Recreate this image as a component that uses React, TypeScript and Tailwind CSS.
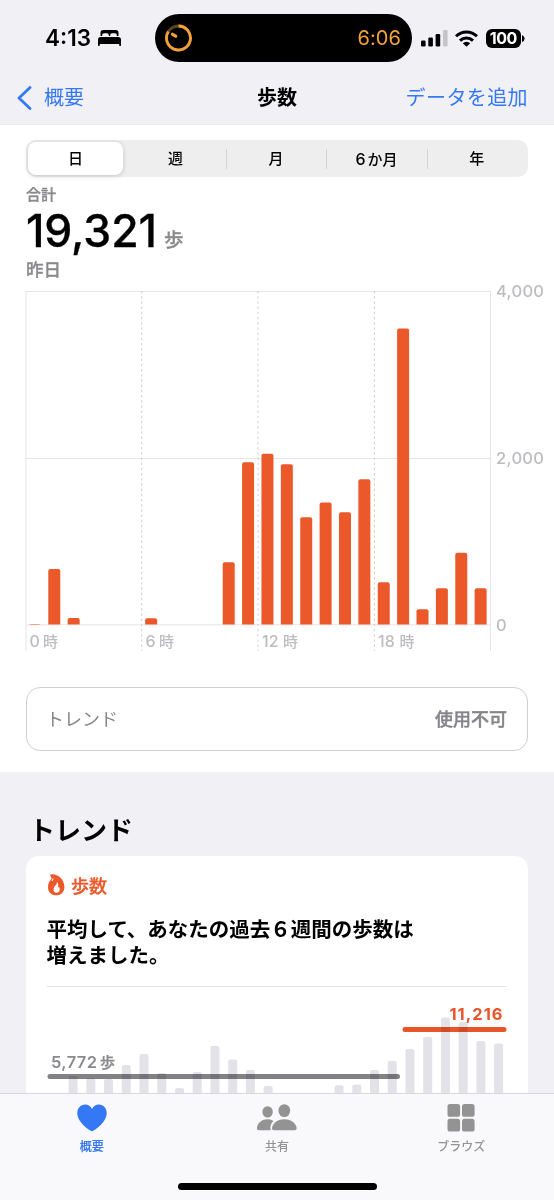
import React from "react";

const FONT = "font-['Inter','Noto_Sans_CJK_JP',sans-serif]";

const SEGMENTS = ["日", "週", "月", "6か月", "年"];

const HOURLY = [
  5, 665, 78, 0, 0, 0, 75, 0, 0, 0, 748, 1948, 2050, 1924, 1288, 1465, 1348, 1744, 508, 3552, 184, 434, 860, 436,
];

const WEEKLY_TOPS = [
  76, 78, 79, 65, 54, 73, 88, 72, 46, 59.5, 70, 86, 0, 0, 0, 85.3, 84.6, 70, 61, 49, 37, 17.5, 22, 41, 43.6,
];

function StatusBar() {
  return (
    <header className="flex h-[76px] items-start">
      <div className="flex h-[76px] w-[155px] items-center pl-[45px]">
        <span className="w-[46px] text-[22.5px] font-semibold leading-none tracking-[0px]">4:13</span>
        <svg className="ml-[7px]" width="23" height="16" viewBox="0 0 23 16">
          <path d="M2.5 6V2.8Q2.5 0 5.3 0H17.7Q20.5 0 20.5 2.8V6H18.8V5Q18.8 3.2 17 3.2H14Q12.2 3.2 12.2 5V6H10.8V5Q10.8 3.2 9 3.2H6Q4.2 3.2 4.2 5V6Z" />
          <path d="M0 9.7Q0 7 2.7 7H20.3Q23 7 23 9.7V15.3Q23 16 22.3 16H21.9Q21.2 16 21.2 15.3V14H1.8V15.3Q1.8 16 1.1 16H.7Q0 16 0 15.3Z" />
        </svg>
      </div>
      <div className="mt-[14px] flex h-[48px] w-[257px] items-center justify-between rounded-full bg-black pl-[10px] pr-[11px]">
        <svg width="27" height="28" viewBox="0 0 27 28" fill="none" strokeWidth="2.8">
          <circle cx="13.5" cy="14" r="12" stroke="#5f4320" />
          <path d="M13.5 2A12 12 0 1 1 3.4 7.5" stroke="#f2a13b" />
          <path d="M7.5 10.3L10.7 12.2" stroke="#f2a13b" strokeWidth="3.2" strokeLinecap="round" />
        </svg>
        <span className="text-[20px] leading-none tracking-[0.1px] text-[#f2a13b]">6:06</span>
      </div>
      <div className="flex h-[76px] items-center pl-[9px]">
        <svg width="27" height="17" viewBox="0 0 27 17">
          <rect x="0" y="10.5" width="4.6" height="6" rx="1.2" />
          <rect x="7.3" y="7.5" width="4.6" height="9" rx="1.2" />
          <rect x="14.6" y="4" width="4.6" height="12.5" rx="1.2" />
          <rect x="22" y="0" width="4.6" height="16.5" rx="1.2" fill="#c5c5c9" />
        </svg>
        <svg className="ml-[7px]" width="23" height="17" viewBox="0 0 23 17" fill="none" stroke="black" strokeWidth="3">
          <path d="M1 6.3A15 15 0 0 1 22 6.3" />
          <path d="M5 10.6A9.3 9.3 0 0 1 18 10.6" />
          <path d="M11.5 16.8L7.8 13.2A5.3 5.3 0 0 1 15.2 13.2Z" fill="black" stroke="none" />
        </svg>
        <div className="ml-2 flex h-[19px] w-[34.5px] items-center justify-center rounded-[6px] bg-black text-[16px] font-bold leading-none tracking-[-0.5px] text-white">
          100
        </div>
        <svg className="ml-px" width="3" height="7" viewBox="0 0 3 7">
          <path d="M0 0Q2.6 1 2.6 3.5T0 7Z" />
        </svg>
      </div>
    </header>
  );
}

function NavBar() {
  return (
    <nav className="grid h-[49px] grid-cols-3 items-center border-b border-[#ececf0] pb-[4px] text-[20px] leading-[30px]">
      <div className="flex items-center pl-[17px] text-[#3478f6]">
        <svg className="mb-px" width="15" height="24" viewBox="0 0 15 24" fill="none" stroke="currentColor" strokeWidth="2.8" strokeLinecap="round" strokeLinejoin="round">
          <path d="M13 1.5L2 12L13 22.5" />
        </svg>
        <span className="ml-3">概要</span>
      </div>
      <h1 className="text-center font-bold">歩数</h1>
      <div className="whitespace-nowrap pr-[26px] text-right tracking-[0.4px] text-[#3478f6]">データを追加</div>
    </nav>
  );
}

function Segmented() {
  return (
    <div className="mx-[26px] flex h-[37px] rounded-[10px] bg-[#eeeeef] text-[15px] font-medium leading-none">
      {SEGMENTS.map((label, i) => (
        <div key={label} className="flex flex-1 items-center">
          {i === 0 ? (
            <div className="ml-[2px] flex h-[33px] w-[95px] items-center justify-center rounded-[8px] bg-white shadow-[0_1px_5px_rgba(0,0,0,0.18)]">
              {label}
            </div>
          ) : (
            <>
              <div className={i === 1 ? "-ml-px h-5 w-px" : "-ml-px h-5 w-px bg-[#d3d3d6]"} />
              <div className="flex-1 pr-[2px] text-center">
                {label.startsWith("6") ? (
                  <>
                    <span className="mr-[2px] text-[16px]">6</span>
                    {label.slice(1)}
                  </>
                ) : (
                  label
                )}
              </div>
            </>
          )}
        </div>
      ))}
    </div>
  );
}

function StepsChart() {
  const base = 333.5;
  return (
    <svg className="block overflow-visible" width="554" height="370" viewBox="0 0 554 370">
      <g stroke="#e5e5e8" strokeWidth="1">
        <path d="M26 .5H490.5M26 167.5H490.5M26 333.8H490.5M26 0V360M490.5 0V360" />
        <path d="M141.7 0V360M258 0V360M374.4 0V360" stroke="#cfcfd2" strokeDasharray="2.4 2.8" />
      </g>
      <g fill="#eb5829">
        {HOURLY.map((v, i) => {
          const h = v / 12;
          const r = Math.min(2, h);
          const x = 28.9 + i * 19.38;
          return v > 0 ? (
            <path key={i} d={`M${x} ${base}v${r - h}q0 ${-r} 2 ${-r}h8q2 0 2 ${r}v${h - r}z`} />
          ) : null;
        })}
      </g>
      <g fill="#bdbdc1" fontSize="16.5" fontWeight="500">
        <text x="496" y="6" textLength="48">4,000</text>
        <text x="496" y="173" textLength="48">2,000</text>
        <text x="496" y="339.5">0</text>
      </g>
      <g fill="#bdbdc1" fontSize="15" fontWeight="500">
        <g fontSize="16">
          <text x="29.5" y="356">0</text>
          <text x="145.5" y="356">6</text>
          <text x="262" y="356">12</text>
          <text x="378" y="356">18</text>
        </g>
        <text x="43" y="356">時</text>
        <text x="159" y="356">時</text>
        <text x="283" y="356">時</text>
        <text x="399.5" y="356">時</text>
      </g>
    </svg>
  );
}

function WeeklyChart() {
  return (
    <svg className="block" width="502" height="106" viewBox="26 -13 502 106">
      <g fill="none" strokeWidth="5" strokeLinecap="round">
        <path d="M50 76.6H397.5" stroke="#828286" />
        <path d="M405 29.4H504" stroke="#e9552b" />
      </g>
      <g fill="#e3e2e8" className="mix-blend-multiply">
        {WEEKLY_TOPS.map((top, i) =>
          top ? <rect key={i} x={68.6 + i * 17.73} y={top} width="9" height={110 - top} rx="2" /> : null,
        )}
      </g>
      <text x="51" y="67.5" fontSize="16.5" fontWeight="600" fill="#8a8a8e" textLength="46">5,772</text>
      <text x="100" y="67.5" fontSize="15" fontWeight="500" fill="#8a8a8e" stroke="#8a8a8e" strokeWidth=".3">歩</text>
      <text x="449.5" y="20.3" fontSize="16.5" fontWeight="700" fill="#e9552b" textLength="53">11,216</text>
    </svg>
  );
}

function TrendCard() {
  return (
    <section className="flex h-[321px] flex-col overflow-hidden px-[26px]">
      <h2 className="mt-[40px] h-[44px] pl-[3px] text-[26px] font-bold leading-[37px]">トレンド</h2>
      <div className="flex h-[237px] flex-col rounded-t-[13px] bg-white">
        <div className="flex h-[61px] items-center pl-[22px] text-[#eb5829]">
          <svg className="mb-[3px]" width="17" height="22" viewBox="0 0 17 22">
            <path
              fillRule="evenodd"
              d="M3 .4C9-.5 16.4 4.6 16.4 13C16.4 18 13 21.3 8.3 21.3C3.4 21.3 0 18 0 13.2C0 9.6 1.4 6.8 3.1 5.2C3.7 4.6 3.6 3.4 2.4 1.9C1.8 1.1 2.1.5 3 .4ZM3.6 6.2C3.7 7.2 4.2 7.6 4.8 6.8C5.6 5.6 5.4 4.6 4.8 3.6C4.9 4.7 4.4 5.5 3.6 6.2ZM8.8 8C9.2 10.2 7.8 11 6.7 12.3C5.1 14.1 4.9 18.7 8.4 18.7C12.4 18.7 12.2 14.7 10.9 12.6C10.5 13.8 10 14 9.7 13.4C10.7 11.4 10.4 9.2 8.8 8Z"
              fill="currentColor"
            />
          </svg>
          <span className="ml-[6px] text-[18px] font-medium leading-none [-webkit-text-stroke:0.3px]">歩数</span>
        </div>
        <p className="h-[69px] whitespace-nowrap pl-[20.5px] text-[20.5px] font-bold leading-[26px]">
          平均して、あなたの過去６週間の歩数は
          <br />
          増えました。
        </p>
        <div className="mx-[21px] h-px bg-[#e3e3e6]" />
        <WeeklyChart />
      </div>
    </section>
  );
}

function TabBar() {
  return (
    <footer className="flex h-[107px] flex-col border-t border-[#d8d8dc] bg-[#f9f9fb] text-[12px] font-medium leading-[18px] text-[#939393]">
      <div className="grid h-[80px] grid-cols-3">
        <div className="flex flex-col items-center pr-px pt-[10px] text-[#3478f6]">
          <svg width="30" height="28" viewBox="0 0 30 28" fill="currentColor">
            <path d="M15 27.3C14.2 27.3 .3 19.4 .3 9C.3 4 3.8.5 8.1.5C11.3.5 13.6 2.2 15 4.9C16.4 2.2 18.7.5 21.9.5C26.2.5 29.7 4 29.7 9C29.7 19.4 15.8 27.3 15 27.3Z" />
          </svg>
          <span className="mt-[6px] [-webkit-text-stroke:0.2px]">概要</span>
        </div>
        <div className="flex flex-col items-center pt-[10px]">
          <svg width="40" height="28" viewBox="0 0 40 28" fill="currentColor">
            <ellipse cx="10.6" cy="7.9" rx="5.2" ry="5.7" />
            <path d="M0 24.5C0 20 4 15.3 10.5 15.3C13 15.3 14.8 15.9 16.4 16.9C14.2 18.8 12.8 22.2 13.6 26.3H1.8Q0 26.3 0 24.5Z" />
            <ellipse cx="27.3" cy="6.6" rx="5.9" ry="6.4" />
            <path d="M15 24.5C15 20 20 15.2 27.3 15.2C34.8 15.2 39.6 20 39.6 24.5Q39.6 26.3 37.8 26.3H16.8Q15 26.3 15 24.5Z" />
          </svg>
          <span className="mt-[6px]">共有</span>
        </div>
        <div className="flex flex-col items-center pr-px pt-[10px]">
          <svg width="28" height="28" viewBox="0 0 28 28" fill="currentColor">
            <rect x=".5" y="0" width="12.6" height="12.8" rx="2.6" />
            <rect x="15" y="0" width="12.6" height="12.8" rx="2.6" />
            <rect x=".5" y="14.8" width="12.6" height="12.8" rx="2.6" />
            <rect x="15" y="14.8" width="12.6" height="12.8" rx="2.6" />
          </svg>
          <span className="mt-[6px]">ブラウズ</span>
        </div>
      </div>
      <div className="mx-auto mt-[9px] h-[7px] w-[199px] rounded-full bg-black" />
    </footer>
  );
}

export default function App() {
  return (
    <div lang="ja" className={`flex h-[1200px] w-[554px] flex-col overflow-hidden bg-[#f1f0f5] text-black ${FONT}`}>
      <StatusBar />
      <NavBar />
      <main className="flex h-[647px] flex-col bg-white pt-[15px]">
        <Segmented />
        <div className="flex h-[114px] flex-col pl-[26px] text-[#8a8a8e]">
          <div className="mt-[7px] h-[22px] text-[15px] font-medium leading-[22px] [-webkit-text-stroke:0.3px]">合計</div>
          <div className="flex h-[50px] items-baseline">
            <span className="w-[138px] text-[44.5px] font-medium leading-[50px] tracking-[-0.1px] text-black [-webkit-text-stroke:0.3px]">19,321</span>
            <span className="text-[19.5px] font-medium leading-none [-webkit-text-stroke:0.3px]">歩</span>
          </div>
          <div className="h-[26px] text-[17.5px] font-medium leading-[27px] [-webkit-text-stroke:0.3px]">昨日</div>
        </div>
        <StepsChart />
        <div className="mx-[26px] mt-[26px] flex h-[64px] items-center justify-between rounded-[14px] border-[1.5px] border-[#cfcfd6] pl-[19px] pr-[20px] pt-[2px] text-[18px] leading-none text-[#85858a]">
          <span>トレンド</span>
          <span className="font-medium [-webkit-text-stroke:0.4px]">使用不可</span>
        </div>
      </main>
      <TrendCard />
      <TabBar />
    </div>
  );
}
